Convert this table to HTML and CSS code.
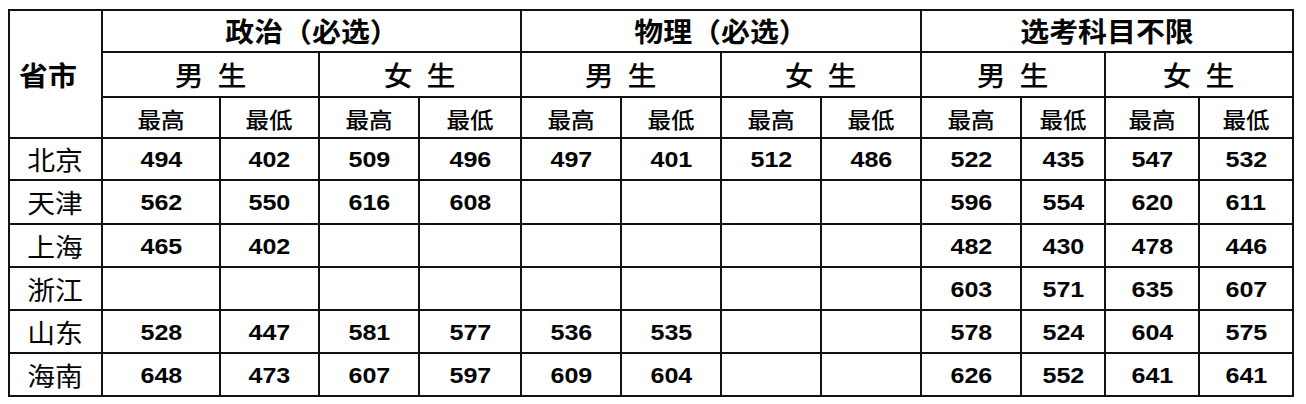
FILE: index.html
```html
<!DOCTYPE html>
<html lang="zh-CN">
<head>
<meta charset="utf-8">
<title>分数线</title>
<link rel="stylesheet" href="styles.css">
</head>
<body>
<div class="frame">
<div class="grid">
  <div class="c corner"><span class="t b lg">省市</span></div>
  <div class="c s4"><span class="t b subj">政治（必选）</span></div>
  <div class="c s4"><span class="t b subj">物理（必选）</span></div>
  <div class="c s4"><span class="t b subj">选考科目不限</span></div>

  <div class="c s2"><span class="t sex">男 生</span></div>
  <div class="c s2"><span class="t sex">女 生</span></div>
  <div class="c s2"><span class="t sex">男 生</span></div>
  <div class="c s2"><span class="t sex">女 生</span></div>
  <div class="c s2"><span class="t sex">男 生</span></div>
  <div class="c s2"><span class="t sex">女 生</span></div>

  <div class="c"><span class="t lbl">最高</span></div><div class="c"><span class="t lbl">最低</span></div>
  <div class="c"><span class="t lbl">最高</span></div><div class="c"><span class="t lbl">最低</span></div>
  <div class="c"><span class="t lbl">最高</span></div><div class="c"><span class="t lbl">最低</span></div>
  <div class="c"><span class="t lbl">最高</span></div><div class="c"><span class="t lbl">最低</span></div>
  <div class="c"><span class="t lbl">最高</span></div><div class="c"><span class="t lbl">最低</span></div>
  <div class="c"><span class="t lbl">最高</span></div><div class="c"><span class="t lbl">最低</span></div>

  <div class="c"><span class="t prov">北京</span></div>
  <div class="c"><span class="n">494</span></div><div class="c"><span class="n">402</span></div>
  <div class="c"><span class="n">509</span></div><div class="c"><span class="n">496</span></div>
  <div class="c"><span class="n">497</span></div><div class="c"><span class="n">401</span></div>
  <div class="c"><span class="n">512</span></div><div class="c"><span class="n">486</span></div>
  <div class="c"><span class="n">522</span></div><div class="c"><span class="n">435</span></div>
  <div class="c"><span class="n">547</span></div><div class="c"><span class="n">532</span></div>

  <div class="c"><span class="t prov">天津</span></div>
  <div class="c"><span class="n">562</span></div><div class="c"><span class="n">550</span></div>
  <div class="c"><span class="n">616</span></div><div class="c"><span class="n">608</span></div>
  <div class="c"></div><div class="c"></div>
  <div class="c"></div><div class="c"></div>
  <div class="c"><span class="n">596</span></div><div class="c"><span class="n">554</span></div>
  <div class="c"><span class="n">620</span></div><div class="c"><span class="n">611</span></div>

  <div class="c"><span class="t prov">上海</span></div>
  <div class="c"><span class="n">465</span></div><div class="c"><span class="n">402</span></div>
  <div class="c"></div><div class="c"></div>
  <div class="c"></div><div class="c"></div>
  <div class="c"></div><div class="c"></div>
  <div class="c"><span class="n">482</span></div><div class="c"><span class="n">430</span></div>
  <div class="c"><span class="n">478</span></div><div class="c"><span class="n">446</span></div>

  <div class="c"><span class="t prov">浙江</span></div>
  <div class="c"></div><div class="c"></div>
  <div class="c"></div><div class="c"></div>
  <div class="c"></div><div class="c"></div>
  <div class="c"></div><div class="c"></div>
  <div class="c"><span class="n">603</span></div><div class="c"><span class="n">571</span></div>
  <div class="c"><span class="n">635</span></div><div class="c"><span class="n">607</span></div>

  <div class="c"><span class="t prov">山东</span></div>
  <div class="c"><span class="n">528</span></div><div class="c"><span class="n">447</span></div>
  <div class="c"><span class="n">581</span></div><div class="c"><span class="n">577</span></div>
  <div class="c"><span class="n">536</span></div><div class="c"><span class="n">535</span></div>
  <div class="c"></div><div class="c"></div>
  <div class="c"><span class="n">578</span></div><div class="c"><span class="n">524</span></div>
  <div class="c"><span class="n">604</span></div><div class="c"><span class="n">575</span></div>

  <div class="c"><span class="t prov">海南</span></div>
  <div class="c"><span class="n">648</span></div><div class="c"><span class="n">473</span></div>
  <div class="c"><span class="n">607</span></div><div class="c"><span class="n">597</span></div>
  <div class="c"><span class="n">609</span></div><div class="c"><span class="n">604</span></div>
  <div class="c"></div><div class="c"></div>
  <div class="c"><span class="n">626</span></div><div class="c"><span class="n">552</span></div>
  <div class="c"><span class="n">641</span></div><div class="c"><span class="n">641</span></div>
</div>
</div>
</body>
</html>
```

FILE: styles.css
```css
html, body {
  margin: 0;
  padding: 0;
  background: #ffffff;
}
body {
  width: 1306px;
  height: 404px;
  overflow: hidden;
  font-family: "Noto Sans CJK SC", "Noto Sans", sans-serif;
  color: #050505;
}
.frame {
  padding: 9px 0 0 8px;
}
.grid {
  display: grid;
  grid-template-columns: 91px 116px 97px 98px 100px 98px 98px 98px 98px 98px 82px 92px 92px;
  grid-template-rows: 40px 43px 39px 40px 42px 41px 41px 41px 41px;
  gap: 2px;
  padding: 2px;
  background: #111118;
  width: max-content;
}
.c {
  background: #ffffff;
  display: flex;
  align-items: center;
  justify-content: center;
  overflow: hidden;
}
.corner {
  grid-row: 1 / span 3;
  justify-content: flex-start;
  padding-left: 11px;
}
.s4 { grid-column: span 4; }
.s2 { grid-column: span 2; }
.t {
  display: inline-block;
  transform: scaleX(1.07);
  line-height: 1;
  white-space: nowrap;
}
.b { font-weight: 700; }
.lg { font-size: 27px; }
.subj { font-size: 27px; margin-top: -2px; }
.sex { font-size: 27px; word-spacing: 7px; font-weight: 500; }
.lbl { font-size: 22px; font-weight: 500; }
.prov { font-size: 26px; }
.n {
  display: inline-block;
  font-family: "Liberation Sans", Arial, sans-serif;
  font-weight: 700;
  font-size: 22px;
  line-height: 1;
  margin-top: 2px;
  transform: scaleX(1.14);
}
```
